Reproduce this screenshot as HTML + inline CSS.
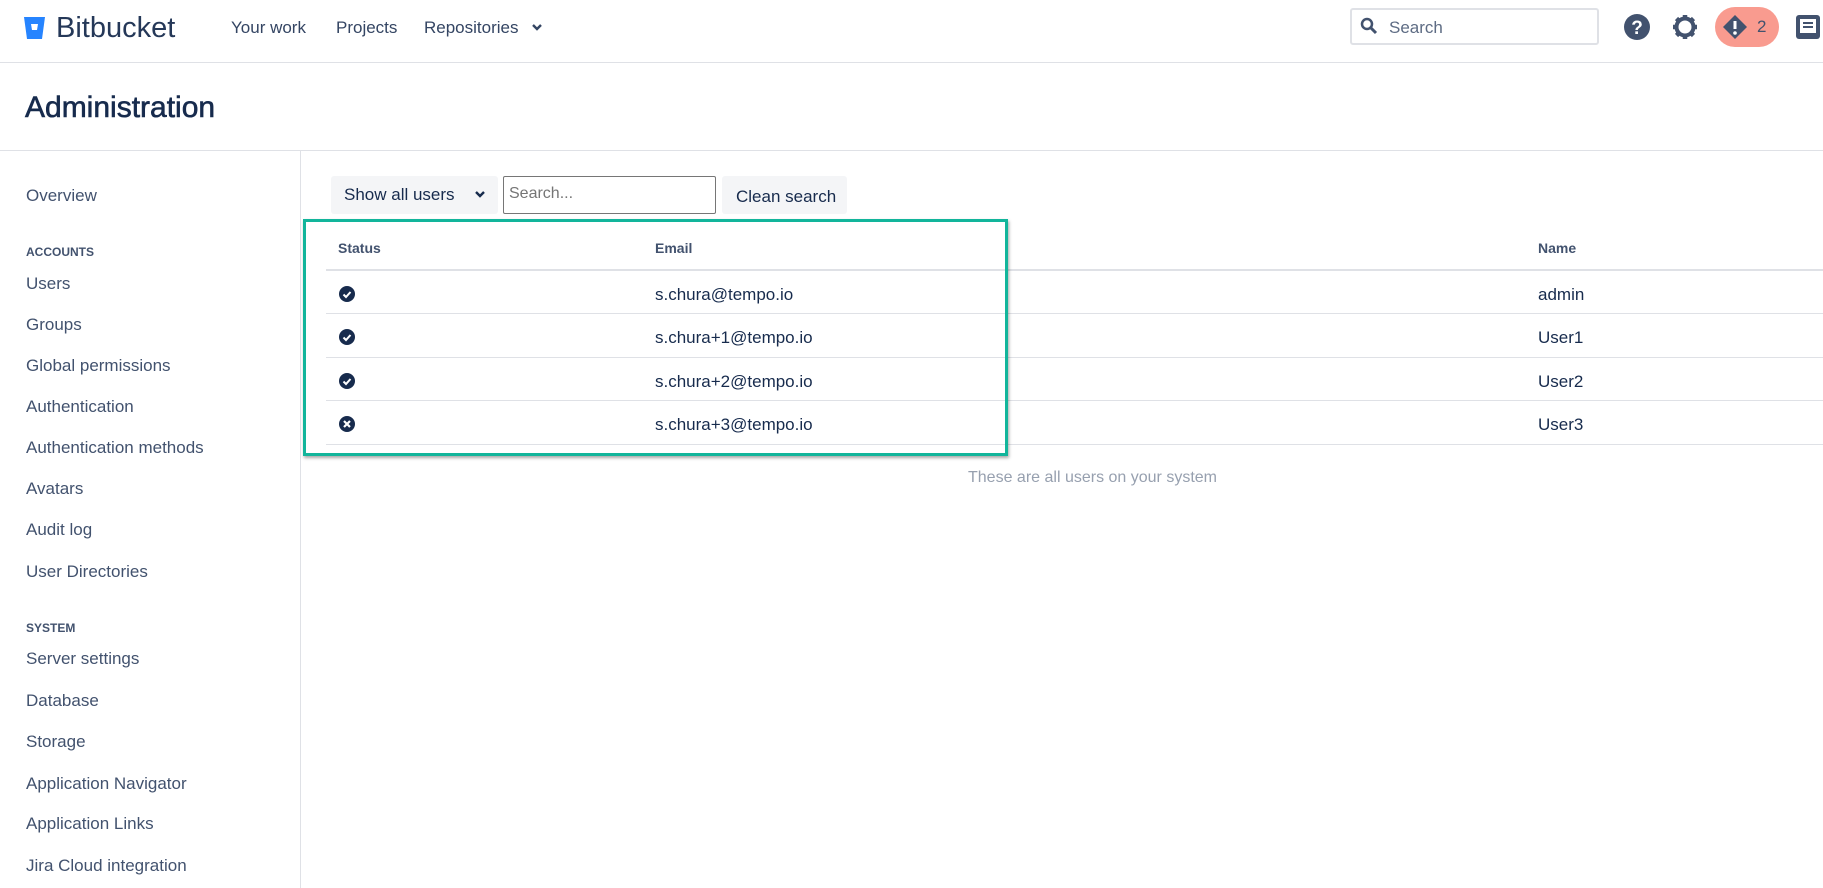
<!DOCTYPE html>
<html><head><meta charset="utf-8"><style>
*{margin:0;padding:0;box-sizing:border-box}
body{width:1823px;height:888px;overflow:hidden;background:#fff;font-family:"Liberation Sans",sans-serif;color:#172b4d;position:relative}
.a{position:absolute;white-space:nowrap}
.nav{font-size:17px;color:#344563;top:18px}
.side{font-size:17px;color:#42526e;left:26px}
.hd{font-size:12px;font-weight:bold;color:#42526e;left:26px}
.th{font-size:14px;color:#42526e;font-weight:bold}
.td{font-size:17px;color:#172b4d}
.ln{position:absolute;left:326px;right:0;height:1px;background:#dfe1e6}
</style></head><body>
<!-- header -->
<svg class="a" style="left:23px;top:16px" width="23" height="24" viewBox="0 0 23 24"><path d="M1 1h21l-3 22H4z" fill="#2684ff"/><path d="M8 8h7l-1 6H9z" fill="#fff"/></svg>
<div class="a" style="left:56px;top:12px;font-size:29px;color:#253858">Bitbucket</div>
<div class="a nav" style="left:231px">Your work</div>
<div class="a nav" style="left:336px">Projects</div>
<div class="a nav" style="left:424px">Repositories</div>
<svg class="a" style="left:531px;top:23px" width="12" height="9" viewBox="0 0 12 9"><path d="M2 2l4 4 4-4" stroke="#344563" stroke-width="2.4" fill="none"/></svg>
<div class="a" style="left:1350px;top:8px;width:249px;height:37px;border:2px solid #dfe1e6;border-radius:3px"></div>
<svg class="a" style="left:1360px;top:17px" width="18" height="18" viewBox="0 0 18 18"><circle cx="7" cy="7" r="5" fill="none" stroke="#42526e" stroke-width="2.5"/><path d="M11 11l5 5" stroke="#42526e" stroke-width="3"/></svg>
<div class="a" style="left:1389px;top:18px;font-size:17px;color:#5e6c84">Search</div>
<svg class="a" style="left:1623px;top:13px" width="28" height="28" viewBox="0 0 28 28"><circle cx="14" cy="14" r="13" fill="#42526e"/><text x="14" y="21" font-size="19" font-weight="bold" fill="#fff" text-anchor="middle" font-family="Liberation Sans">?</text></svg>
<svg class="a" style="left:1671px;top:13px" width="28" height="28" viewBox="0 0 28 28"><circle cx="14" cy="14" r="8.5" fill="none" stroke="#42526e" stroke-width="4"/><g stroke="#42526e" stroke-width="4.5"><path d="M14 2v5M14 21v5M2 14h5M21 14h5M5.5 5.5l3.5 3.5M19 19l3.5 3.5M22.5 5.5L19 9M5.5 22.5L9 19"/></g></svg>
<div class="a" style="left:1715px;top:7px;width:64px;height:40px;border-radius:20px;background:#f99b8f"></div>
<svg class="a" style="left:1722px;top:14px" width="26" height="26" viewBox="0 0 26 26"><path d="M13 1l12 12-12 12L1 13z" fill="#42526e"/><path d="M13 7v8" stroke="#fff" stroke-width="3"/><circle cx="13" cy="19" r="1.8" fill="#fff"/></svg>
<div class="a" style="left:1757px;top:17px;font-size:17px;color:#42526e">2</div>
<svg class="a" style="left:1795px;top:14px" width="26" height="26" viewBox="0 0 26 26"><rect x="1" y="1" width="24" height="24" rx="3" fill="#42526e"/><rect x="5" y="5" width="16" height="14" fill="#fff"/><path d="M8 9h10M8 13h10" stroke="#42526e" stroke-width="2"/></svg>
<div class="a" style="left:0;right:0;top:62px;height:1px;background:#dfe1e6"></div>
<div class="a" style="left:25px;top:91px;font-size:30px;color:#172b4d;-webkit-text-stroke:0.6px #172b4d">Administration</div>
<div class="a" style="left:0;right:0;top:150px;height:1px;background:#dfe1e6"></div>
<div class="a" style="left:300px;top:150px;bottom:0;width:1px;background:#dfe1e6"></div>
<!-- sidebar -->
<div class="a side" style="top:186px">Overview</div>
<div class="a hd" style="top:245px">ACCOUNTS</div>
<div class="a side" style="top:274px">Users</div>
<div class="a side" style="top:315px">Groups</div>
<div class="a side" style="top:356px">Global permissions</div>
<div class="a side" style="top:397px">Authentication</div>
<div class="a side" style="top:438px">Authentication methods</div>
<div class="a side" style="top:479px">Avatars</div>
<div class="a side" style="top:520px">Audit log</div>
<div class="a side" style="top:562px">User Directories</div>
<div class="a hd" style="top:621px">SYSTEM</div>
<div class="a side" style="top:649px">Server settings</div>
<div class="a side" style="top:691px">Database</div>
<div class="a side" style="top:732px">Storage</div>
<div class="a side" style="top:774px">Application Navigator</div>
<div class="a side" style="top:814px">Application Links</div>
<div class="a side" style="top:856px">Jira Cloud integration</div>
<!-- toolbar -->
<div class="a" style="left:331px;top:176px;width:167px;height:38px;background:#f4f5f7;border-radius:3px"></div>
<div class="a" style="left:344px;top:185px;font-size:17px;color:#172b4d">Show all users</div>
<svg class="a" style="left:474px;top:190px" width="12" height="9" viewBox="0 0 12 9"><path d="M2 2l4 4 4-4" stroke="#172b4d" stroke-width="2.4" fill="none"/></svg>
<div class="a" style="left:503px;top:176px;width:213px;height:38px;border:1px solid #767676;border-radius:2px"></div>
<div class="a" style="left:509px;top:185px;font-size:16px;color:#757575">Search...</div>
<div class="a" style="left:722px;top:176px;width:125px;height:38px;background:#f4f5f7;border-radius:3px"></div>
<div class="a" style="left:736px;top:187px;font-size:17px;color:#172b4d">Clean search</div>
<!-- table -->
<div class="a th" style="left:338px;top:240px">Status</div>
<div class="a th" style="left:655px;top:240px">Email</div>
<div class="a th" style="left:1538px;top:240px">Name</div>
<div class="ln" style="top:269px;height:2px"></div>
<div class="ln" style="top:313px"></div>
<div class="ln" style="top:357px"></div>
<div class="ln" style="top:400px"></div>
<div class="ln" style="top:444px"></div>
<svg class="a" style="left:339px;top:286px" width="16" height="16" viewBox="0 0 16 16"><circle cx="8" cy="8" r="8" fill="#172b4d"/><path d="M4.5 8.5l2.5 2.5 4.5-5" stroke="#fff" stroke-width="2" fill="none"/></svg>
<svg class="a" style="left:339px;top:329px" width="16" height="16" viewBox="0 0 16 16"><circle cx="8" cy="8" r="8" fill="#172b4d"/><path d="M4.5 8.5l2.5 2.5 4.5-5" stroke="#fff" stroke-width="2" fill="none"/></svg>
<svg class="a" style="left:339px;top:373px" width="16" height="16" viewBox="0 0 16 16"><circle cx="8" cy="8" r="8" fill="#172b4d"/><path d="M4.5 8.5l2.5 2.5 4.5-5" stroke="#fff" stroke-width="2" fill="none"/></svg>
<svg class="a" style="left:339px;top:416px" width="16" height="16" viewBox="0 0 16 16"><circle cx="8" cy="8" r="8" fill="#172b4d"/><path d="M5 5l6 6M11 5l-6 6" stroke="#fff" stroke-width="2.2"/></svg>
<div class="a td" style="left:655px;top:285px">s.chura@tempo.io</div>
<div class="a td" style="left:655px;top:328px">s.chura+1@tempo.io</div>
<div class="a td" style="left:655px;top:372px">s.chura+2@tempo.io</div>
<div class="a td" style="left:655px;top:415px">s.chura+3@tempo.io</div>
<div class="a td" style="left:1538px;top:285px">admin</div>
<div class="a td" style="left:1538px;top:328px">User1</div>
<div class="a td" style="left:1538px;top:372px">User2</div>
<div class="a td" style="left:1538px;top:415px">User3</div>
<div class="a" style="left:303px;top:219px;width:705px;height:237px;border:3px solid #12b59b;box-shadow:1px 2px 3px rgba(0,0,0,.35)"></div>
<div class="a" style="left:968px;top:469px;font-size:16px;color:#97a0af">These are all users on your system</div>
</body></html>
